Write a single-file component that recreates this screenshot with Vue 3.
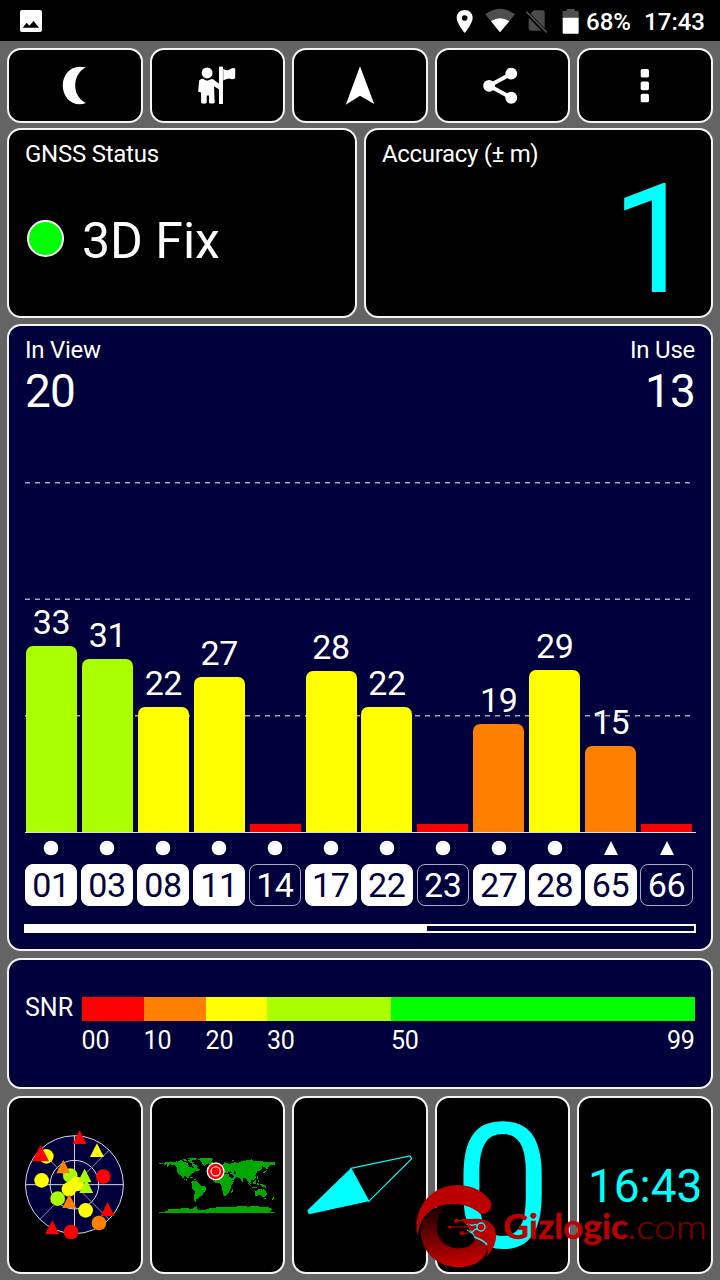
<script setup>
const satellites = [
  { id: '01', snr: 33, h: 186.5, color: '#aaff00', used: true },
  { id: '03', snr: 31, h: 173.5, color: '#aaff00', used: true },
  { id: '08', snr: 22, h: 125.5, color: '#ffff00', used: true },
  { id: '11', snr: 27, h: 155.5, color: '#ffff00', used: true },
  { id: '14', h: 8, color: '#ff0000', used: false },
  { id: '17', snr: 28, h: 161.5, color: '#ffff00', used: true },
  { id: '22', snr: 22, h: 125.5, color: '#ffff00', used: true },
  { id: '23', h: 8, color: '#ff0000', used: false },
  { id: '27', snr: 19, h: 108.5, color: '#ff8000', used: true },
  { id: '28', snr: 29, h: 162.5, color: '#ffff00', used: true },
  { id: '65', snr: 15, h: 86.5, color: '#ff8000', used: true, tri: true },
  { id: '66', h: 8, color: '#ff0000', used: false, tri: true },
]

const scale = [
  { label: '00', w: 62, color: '#ff0000' },
  { label: '10', w: 62, color: '#ff8000' },
  { label: '20', w: 61.4, color: '#ffff00' },
  { label: '30', w: 124, color: '#aaff00' },
  { label: '50', w: 303.6, color: '#00ff00', end: '99' },
]

const sky = [
  { x: 139, y: 199, c: '#ffff00' },
  { x: 122, y: 190, c: '#ff0000', t: 1, s: 1.2 },
  { x: 239, y: 142, c: '#ff0000', t: 1 },
  { x: 291, y: 181, c: '#ffff00', t: 1 },
  { x: 125, y: 271, c: '#ffff00' },
  { x: 211, y: 257, c: '#aaff00' },
  { x: 190, y: 230, c: '#ff8000', t: 1 },
  { x: 310, y: 260, c: '#ff0000' },
  { x: 173, y: 326, c: '#aaff00' },
  { x: 207, y: 298, c: '#ffff00' },
  { x: 230, y: 282, c: '#ffff00' },
  { x: 254, y: 257, c: '#aaff00', t: 1 },
  { x: 259, y: 289, c: '#aaff00', t: 1 },
  { x: 208, y: 334, c: '#ff8000', t: 1 },
  { x: 257, y: 361, c: '#ffff00' },
  { x: 323, y: 358, c: '#ff0000', t: 1 },
  { x: 297, y: 399, c: '#ff8000' },
  { x: 157, y: 412, c: '#ff0000', t: 1 },
  { x: 213, y: 426, c: '#ff0000' },
]
</script>

<template>
  <div class="screen">
    <header class="status">
      <svg class="pic" width="22" height="22" viewBox="60 30 66 66">
        <rect x="60" y="30" width="66" height="66" rx="6" fill="#fff" />
        <path d="M68 83 L80 68 L88 77 L101 63 L117 83 Z" fill="#000" />
      </svg>
      <svg class="sysicons" width="130" height="26" viewBox="280 22 390 78">
        <path d="M315 28 C301 28 291 38 291 52 C291 68 315 97 315 97 C315 97 339 68 339 52 C339 38 329 28 315 28 Z" fill="#fff" />
        <circle cx="315" cy="52" r="8.500" fill="#000" />
        <path d="M377 41 Q421 8 466 41 L421 95 Z" fill="#4f4f4f" />
        <path d="M394 62 Q421 44 449 62 L421 95 Z" fill="#fff" />
        <path d="M522 29 H549 Q555 29 555 35 V84 Q555 90 549 90 H513 Q507 90 507 84 V45 Z" fill="#4a4a4a" />
        <path d="M498 33 L560 97" stroke="#000" stroke-width="12" />
        <path d="M500 33 L561 95" stroke="#4f4f4f" stroke-width="5" />
        <path d="M609 31 H621 V25 H645 V31 H657 V52 H609 Z" fill="#4f4f4f" />
        <rect x="609" y="51" width="48" height="48" rx="2" fill="#fff" />
      </svg>
      <span class="pct">68%</span>
      <span class="clock">17:43</span>
    </header>

    <nav class="row tools">
      <button class="panel">
        <svg width="40" height="43" viewBox="164 190 120 130">
          <path d="M257 200 Q248 198 238 198 C208 198 187 224 187 255 C187 286 208 312 238 312 Q248 312 257 308 C214 288 214 222 257 200 Z" fill="#fff" />
        </svg>
      </button>
      <button class="panel">
        <svg width="40" height="43" viewBox="592 190 120 130">
          <g fill="#fff">
            <circle cx="622" cy="217" r="16.500" />
            <path d="M603 236 Q608 233 613 237 L622 241 L632 237 Q638 234 643 238 L661 252 L659 267 L643 257 L645 307 Q637 312 628 308 V285 H621 V308 Q612 312 604 308 V276 L595 274 L598 240 Z" />
            <rect x="658" y="198" width="12" height="113" />
            <path d="M671 204 Q682 212 690 207 Q700 199 707 204 V233 Q698 239 690 234 Q682 234 671 240 Z" />
          </g>
        </svg>
      </button>
      <button class="panel">
        <svg width="40" height="43" viewBox="1020 190 120 130">
          <path d="M1080 197 L1123 311 L1080 286 L1037 313 Z" fill="#fff" />
        </svg>
      </button>
      <button class="panel">
        <svg width="40" height="43" viewBox="368 190 120 130">
          <path d="M453 220 L386 256 L453 292" fill="none" stroke="#fff" stroke-width="12" />
          <circle cx="386" cy="256" r="18" fill="#fff" />
          <circle cx="453" cy="219" r="18" fill="#fff" />
          <circle cx="453" cy="292" r="18" fill="#fff" />
        </svg>
      </button>
      <button class="panel">
        <svg width="40" height="43" viewBox="796 190 120 130">
          <rect v-for="y in [205, 243, 280]" :key="y" x="843" :y="y" width="25" height="26" rx="5" fill="#fff" />
        </svg>
      </button>
    </nav>

    <section class="row fix">
      <div class="panel">
        <div class="caption">GNSS Status</div>
        <div class="state"><i class="led"></i><span>3D Fix</span></div>
      </div>
      <div class="panel">
        <div class="caption acc">Accuracy (± m)</div>
        <div class="accuracy">1</div>
      </div>
    </section>

    <section class="panel signal">
      <div class="heads">
        <div><div class="caption">In View</div><div class="count">20</div></div>
        <div class="right"><div class="caption">In Use</div><div class="count">13</div></div>
      </div>
      <div class="chart">
        <svg class="grid" width="671" height="360" viewBox="0 0 671 360">
          <g stroke="#a4a4bb" stroke-width="1.500" stroke-dasharray="5 5">
            <path d="M0 10.700H667" /><path d="M0 127.200H667" /><path d="M0 243.700H667" />
          </g>
        </svg>
        <div class="bars">
          <div v-for="s in satellites" :key="s.id" class="col">
            <span v-if="s.snr" class="val">{{ s.snr }}</span>
            <i class="bar" :class="{ flat: !s.snr }" :style="{ height: s.h + 'px', background: s.color }"></i>
          </div>
        </div>
      </div>
      <div class="ids">
        <div v-for="s in satellites" :key="s.id" class="sat">
          <svg width="16" height="16" viewBox="0 0 16 16">
            <path v-if="s.tri" d="M8 1 L15 15 H1 Z" fill="#fff" />
            <circle v-else cx="8" cy="8" r="7.300" fill="#fff" />
          </svg>
          <span class="id" :class="{ used: s.used }">{{ s.id }}</span>
        </div>
      </div>
      <div class="progress"><i></i></div>
    </section>

    <section class="panel snr">
      <span class="snrname">SNR</span>
      <div class="scale">
        <div v-for="s in scale" :key="s.label" class="seg" :style="{ width: s.w + 'px' }">
          <i :style="{ background: s.color }"></i>
          <div class="ticks"><span>{{ s.label }}</span><span v-if="s.end">{{ s.end }}</span></div>
        </div>
      </div>
    </section>

    <section class="row bottom">
      <div class="panel">
        <svg class="fill" viewBox="27 24 395 522">
          <circle cx="223.500" cy="284" r="147" fill="#00003c" />
          <g fill="none" stroke="#d8d8e4" stroke-width="3">
            <circle cx="223.500" cy="284" r="147" />
            <circle cx="223.500" cy="284" r="73" />
            <path d="M77 284H370M223.500 137V431" />
            <path d="M120 388L327 181M120 181L327 388" stroke-width="2.500" stroke="#a9a9c0" />
          </g>
          <template v-for="(p, i) in sky" :key="i">
            <path v-if="p.t" d="M0 -21 L21 20 H-21 Z" :fill="p.c" :transform="`translate(${p.x} ${p.y}) scale(${p.s || 1})`" />
            <circle v-else :cx="p.x" :cy="p.y" r="22" :fill="p.c" />
          </template>
        </svg>
      </div>
      <div class="panel">
        <svg class="fill" viewBox="20 24 395 522" shape-rendering="crispEdges">
          <g fill="#00a800">
            <path d="M42 219H52V222H42ZM57 219L62 216L86 217L92 214L104 217L116 215L126 219L130 226L138 229L142 222L152 224L158 228L154 234L164 239L158 243L149 244L144 249L137 253L131 260L128 266L122 259L116 259L114 266L120 269L126 267L124 273L130 276L136 275L134 278L124 272L113 267L108 258L100 252L95 242L94 232L86 225L74 223L68 231L63 229L65 223L57 225Z" />
            <path d="M98 215L107 210L113 214L107 217ZM114 208L122 206L125 212L118 215ZM128 210L136 208L142 216L148 218L141 222L133 216ZM128 205L155 204L158 207L145 210L130 208Z" />
            <path d="M156 207L170 204L198 205L203 208L197 213L195 219L184 222L177 227L171 220L166 212Z" />
            <path d="M133 261H142V264H133ZM145 266H152V269H145ZM138 277L145 272L154 274L162 280L166 286L178 289L184 293L181 302L176 307L172 315L166 319L160 325L154 326L152 338L147 334L147 319L148 305L142 297L139 289L141 282Z" />
            <path d="M192 217H203V221H192ZM228 209H240V211H228ZM259 212L269 209L266 214ZM217 236L222 229L226 232L222 240Z" />
            <path d="M228 229L238 217L248 221L263 220L266 217L280 218L292 213L306 211L318 208L327 213L342 212L355 215L378 217L390 216V224L379 226L374 225L369 231L362 237L358 230L349 229L350 236L343 244L336 244L333 251L329 257L333 262L326 269L316 271L316 281L309 276L305 270L301 264L295 263L290 276L285 266L277 262L270 263L265 270L258 272L252 261L262 264L266 260L262 256L253 249L238 250L231 246L226 251L207 249L210 243L221 244L225 238Z" />
            <path d="M207 255L214 248L228 249L235 253L250 253L253 263L258 272L266 273L264 279L257 287L256 297L251 307L243 317H236L232 307L231 294L227 285L222 279L210 279L203 271V263Z" />
            <path d="M259 300L265 296L263 306L258 309ZM289 273H292V277H289ZM306 275L318 286L321 290L314 288ZM324 276L331 270L334 275L330 284L323 282ZM335 280H341V286H335ZM343 282L352 283L362 289L364 294L351 290ZM321 291H336V293H321ZM334 259H337V266H334ZM338 270H342V277H338ZM354 246L362 241L366 236V243L355 250ZM364 225H367V237H364Z" />
            <path d="M328 305L335 301L342 297L350 298L351 302L356 297L360 303L364 309L364 316L358 321L350 320L345 315L337 317L329 318ZM357 324H361V327H357ZM379 327L383 324L387 319V323L381 330Z" />
            <path d="M42 370V366L65 364L70 358L82 356L100 357L112 354L128 355L143 357L150 350L158 346L155 353L158 361L177 361L190 356L203 353L226 352L245 350L265 352L282 348L310 350L330 347L348 351L360 350L374 353L381 358L374 363L377 366H390V370Z" />
          </g>
          <g fill="#000"><path d="M133 221L143 228L146 235L137 231L128 232ZM247 246L256 244L262 248L250 249ZM266 244L270 244L272 252L267 251ZM229 235L232 228L236 231L233 239Z" /></g>
          <g shape-rendering="auto">
            <circle cx="211" cy="244" r="27" fill="#fff" /><circle cx="211" cy="244" r="23" fill="#f00" />
            <circle cx="211" cy="244" r="15.500" fill="#fff" /><circle cx="211" cy="244" r="12" fill="#f00" />
          </g>
        </svg>
      </div>
      <div class="panel">
        <svg class="fill" viewBox="12.6 24 395 522">
          <path d="M183 235L237 334L57 373L53 361Z" fill="#0ff" />
          <path d="M183 235L361 198L366 206L237 334Z" fill="none" stroke="#0ff" stroke-width="3.500" />
        </svg>
      </div>
      <div class="panel zero">0</div>
      <div class="panel gmt">16:43</div>
    </section>

    <svg class="mark" width="308" height="100" viewBox="0 0 924 300">
      <defs>
        <linearGradient id="low" x1="0.350" y1="0" x2="0.500" y2="1">
          <stop offset="0" stop-color="#180000" /><stop offset="0.450" stop-color="#6d0000" /><stop offset="1" stop-color="#c80000" />
        </linearGradient>
        <linearGradient id="com" x1="0" x2="1"><stop offset="0" stop-color="#900000" /><stop offset="0.350" stop-color="#640000" /><stop offset="1" stop-color="#840000" /></linearGradient>
      </defs>
      <path d="M18 170 C20 120 40 90 80 80 L40 130 L28 190 Z" fill="#000" />
      <path d="M100 78 C55 88 27 115 27 160 C28 218 80 262 138 262 C185 262 224 238 226 204 C222 184 205 172 185 165 C195 187 172 205 140 205 C100 205 74 178 75 142 C75 115 85 95 100 78 Z" fill="url(#low)" />
      <path d="M17 168 C-2 85 60 15 135 15 C182 15 216 35 235 62 C246 85 227 104 205 102 C188 84 155 72 122 72 C72 73 25 98 17 168 Z" fill="#bb0000" />
      <path d="M148 117 L200 116 C238 118 256 146 252 175 C248 198 240 214 224 230 C233 202 225 187 190 168 L168 140 Z" fill="#bb0000" />
      <g fill="none" stroke="#0ff" stroke-width="4">
        <circle cx="207" cy="141" r="12" /><path d="M165 132 L180 136 L190 133 L197 136 M165 150 L178 158 L190 148 L197 146" />
        <path d="M186 170 C207 178 218 184 225 194" stroke-width="5" />
      </g>
      <g fill="none" stroke="#bb0000" stroke-width="3.500"><path d="M112 141H182M134 122H157L175 138M150 160H165L177 145" /></g>
      <g fill="#bb0000"><path d="M105 141L117 135V147Z" /><rect x="127" y="117" width="12" height="11" /><rect x="144" y="154" width="11" height="11" /></g>
      <text x="274" y="177" class="giz" textLength="374" lengthAdjust="spacingAndGlyphs">Gizlogic</text>
      <text x="646" y="177" class="com" textLength="238" lengthAdjust="spacingAndGlyphs" fill="url(#com)">.com</text>
    </svg>
  </div>
</template>

<style>
body { margin: 0; background: #646464; }
</style>

<style scoped>
.screen { position: relative; width: 720px; height: 1280px; box-sizing: border-box; overflow: hidden; background: #646464; color: #fff; font-family: Roboto, "Liberation Sans", sans-serif; display: flex; flex-direction: column; }
.screen * { box-sizing: border-box; }
svg { display: block; }
i { display: block; }
.status { height: 41px; flex: none; background: #000; display: flex; align-items: center; font-size: 24px; font-weight: 500; padding: 0 15px 0 20px; line-height: 40px; }
.sysicons { margin: 0 3px 0 auto; }
.pct { width: 58px; padding-top: 3px; }
.clock { width: 61px; text-align: right; padding-top: 3px; }
.panel { background: #000; border: 2px solid #f4f4f4; border-radius: 14px; min-width: 0; }
.row { display: flex; gap: 7px; margin: 0 7px; flex: none; }
.row > .panel { flex: 1; }
.tools { height: 75px; margin-top: 7px; }
.tools .panel { display: flex; align-items: center; justify-content: center; padding: 0; }
.fix { height: 190px; margin-top: 5px; }
.fix .panel { padding: 10px 17px 0 16px; }
.caption { font-size: 24px; line-height: 28px; white-space: nowrap; letter-spacing: -0.25px; }
.acc { letter-spacing: -0.33px; padding-left: 0.5px; }
.state { display: flex; align-items: center; margin-top: 40px; height: 66px; font-size: 50px; }
.led { width: 37px; height: 37px; border-radius: 50%; background: #0f0; border: 2px solid #fff; margin: -6px 18px 0 2px; }
.accuracy { color: #0ff; font-size: 152px; line-height: 152px; text-align: right; margin: -4px -3px 0 0; }
.signal { background: #00003c; height: 627px; margin: 6px 7px 0; padding: 10px 16px 0; flex: none; }
.heads { display: flex; justify-content: space-between; height: 136px; }
.right { text-align: right; }
.count { font-size: 46px; line-height: 54px; letter-spacing: -0.8px; }
.chart { position: relative; height: 361px; border-bottom: 1px solid #ddd; width: 671px; }
.grid { position: absolute; left: 0; top: 0; }
.bars { position: relative; height: 100%; width: 667px; padding-left: 1px; display: flex; gap: 4.86px; align-items: flex-end; }
.col { flex: 1; display: flex; flex-direction: column; align-items: center; min-width: 0; }
.val { font-size: 34px; line-height: 34px; margin-bottom: 7px; letter-spacing: -0.4px; }
.bar { width: 100%; border-radius: 7px 7px 0 0; }
.bar.flat { border-radius: 0; }
.ids { display: flex; width: 667.5px; gap: 3.86px; margin-top: 7px; }
.sat { flex: 1; min-width: 0; display: flex; flex-direction: column; align-items: center; gap: 8px; }
.id { width: 100%; height: 42px; line-height: 40px; border: 1px solid #aaaabc; border-radius: 8px; text-align: center; font-size: 34px; letter-spacing: -0.4px; }
.id.used { background: #fff; border-color: #fff; color: #00003c; }
.progress { width: 672px; height: 9px; margin: 18px 0 0 -1px; border: 2px solid #fff; }
.progress i { width: 401px; height: 5px; background: #fff; }
.snr { background: #00003c; height: 131px; margin: 7px 7px 0; flex: none; display: flex; padding: 37px 0 0 16px; }
.snrname { width: 56.6px; font-size: 25px; line-height: 22px; }
.scale { display: flex; }
.seg i { height: 24px; }
.ticks { display: flex; justify-content: space-between; font-size: 25px; line-height: 40px; letter-spacing: -0.2px; }
.bottom { height: 178px; margin-top: 7px; }
.fill { width: 100%; height: 100%; }
.zero, .gmt { color: #0ff; display: flex; justify-content: center; white-space: nowrap; }
.zero { font-size: 174px; line-height: 179px; }
.gmt { font-size: 46px; line-height: 176px; }
.mark { position: absolute; left: 412px; top: 1180px; }
.giz { font: 700 103px Lato, sans-serif; fill: #bb0000; stroke: #bb0000; stroke-width: 1.5px; }
.com { font: 300 103px Lato, sans-serif; stroke: #700000; stroke-width: 1.5px; }
</style>
